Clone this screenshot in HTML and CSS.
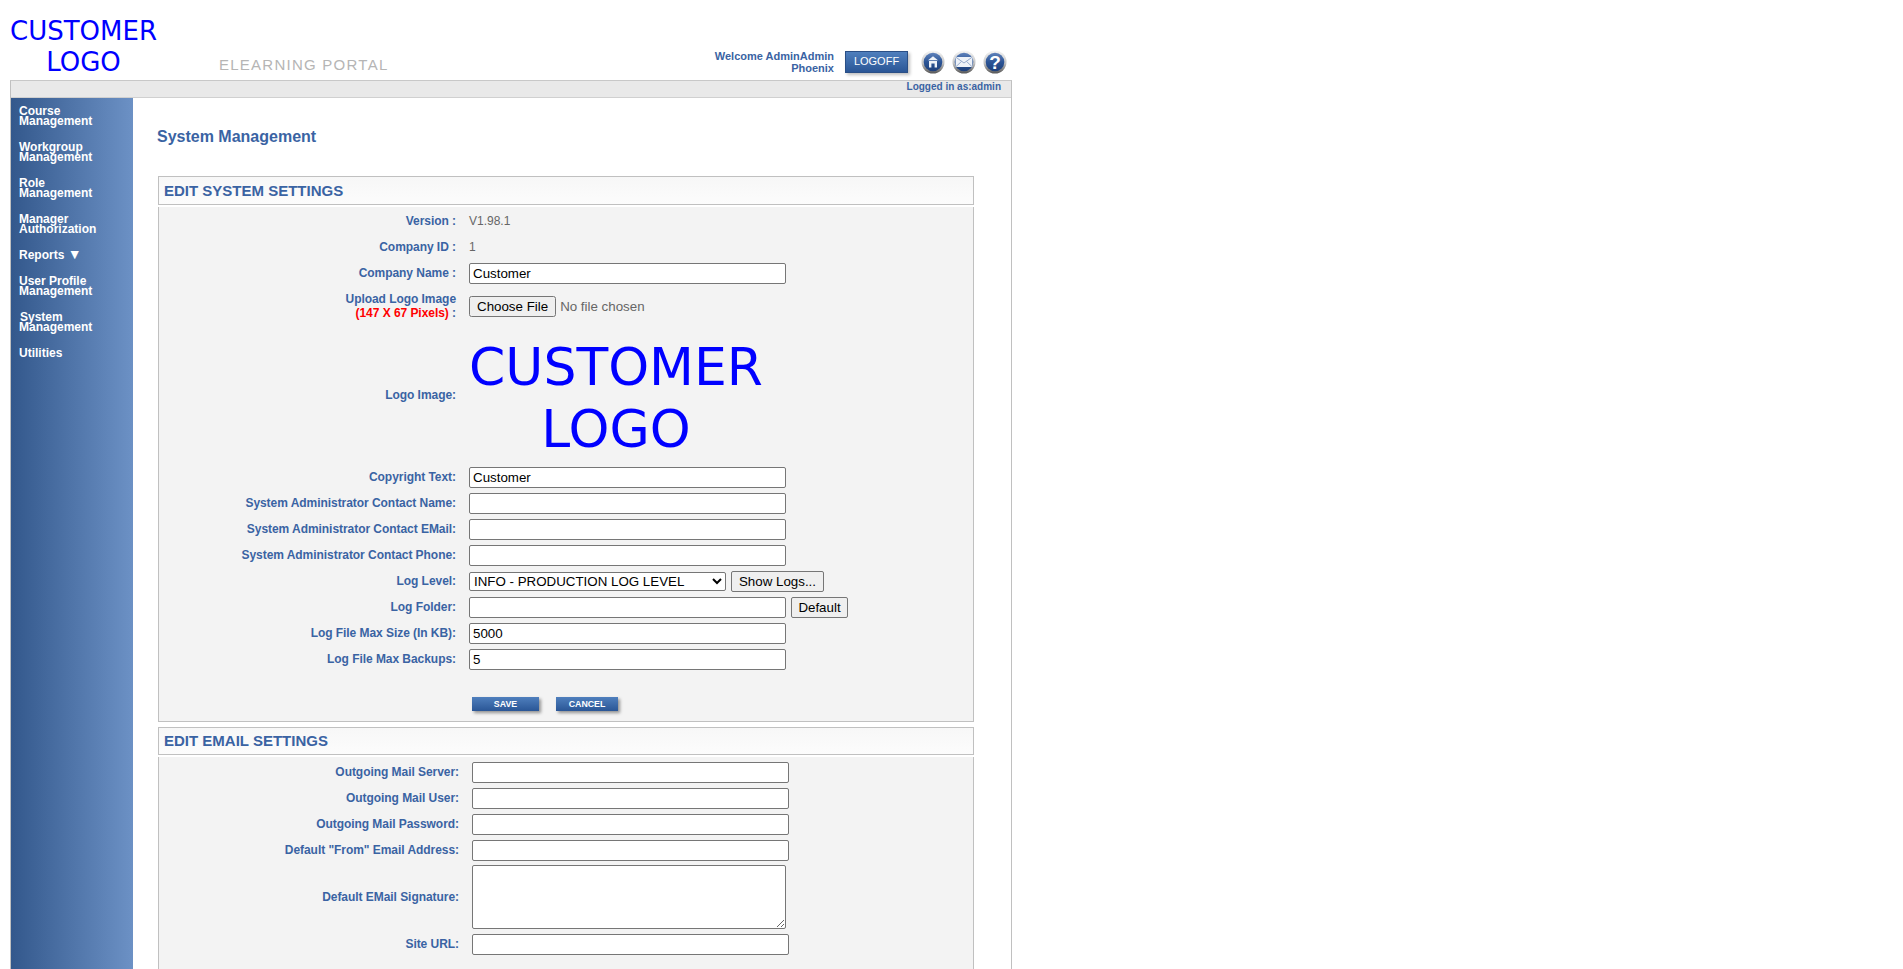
FILE: index.html
```html
<!DOCTYPE html>
<html lang="en">
<head>
<meta charset="utf-8">
<title>System Management</title>
<link rel="stylesheet" href="styles.css">
</head>
<body>
<div class="page">
  <header class="top">
    <div class="logo">CUSTOMER<br>LOGO</div>
    <div class="portal">ELEARNING PORTAL</div>
    <div class="welcome">Welcome AdminAdmin<br>Phoenix</div>
    <a class="logoff">LOGOFF</a>
    <div class="icons">
      <svg class="icon" viewBox="0 0 24 24"><defs>
        <linearGradient id="ring" x1="0" y1="0" x2="0" y2="1"><stop offset="0" stop-color="#f6f6f6"/><stop offset=".55" stop-color="#c4c4c4"/><stop offset="1" stop-color="#555"/></linearGradient>
        <linearGradient id="disc" x1="0" y1="0" x2="0" y2="1"><stop offset="0" stop-color="#5f82bb"/><stop offset=".5" stop-color="#2c5596"/><stop offset="1" stop-color="#1d3f7a"/></linearGradient>
      </defs>
        <circle cx="12" cy="12" r="11.5" fill="url(#ring)"/><circle cx="12" cy="12" r="9.3" fill="url(#disc)"/>
        <path d="M12 6.2 L17 10.2 H7 Z" fill="#eef2f8"/><path d="M8 11 H16 V17.5 H13.6 V13.4 H10.4 V17.5 H8 Z" fill="#eef2f8"/>
      </svg>
      <svg class="icon" viewBox="0 0 24 24">
        <circle cx="12" cy="12" r="11.5" fill="url(#ring)"/><circle cx="12" cy="12" r="9.3" fill="url(#disc)"/>
        <path d="M3.6 7 H20.4 V17 H3.6 Z" fill="#eef2f8"/><path d="M3.6 7 L12 13 L20.4 7 M3.6 17 L9.5 11.4 M20.4 17 L14.5 11.4" fill="none" stroke="#7f98c2" stroke-width=".8"/>
      </svg>
      <svg class="icon" viewBox="0 0 24 24">
        <circle cx="12" cy="12" r="11.5" fill="url(#ring)"/><circle cx="12" cy="12" r="9.3" fill="url(#disc)"/>
        <text class="qmark" x="12" y="18.6" text-anchor="middle">?</text>
      </svg>
    </div>
  </header>
  <div class="frame">
    <div class="status">Logged in as:admin</div>
    <div class="columns">
      <nav class="side">
        <a class="nav">Course<br>Management</a>
        <a class="nav">Workgroup<br>Management</a>
        <a class="nav">Role<br>Management</a>
        <a class="nav">Manager<br>Authorization</a>
        <a class="nav">Reports <span class="caret">▼</span></a>
        <a class="nav">User Profile<br>Management</a>
        <a class="nav"><span class="nudge">System</span><br>Management</a>
        <a class="nav">Utilities</a>
      </nav>
      <main class="content">
        <h1 class="title">System Management</h1>

        <h2 class="sec-head">EDIT SYSTEM SETTINGS</h2>
        <section class="sec-body sys">
          <div class="row"><label class="lab">Version :</label><span class="val">V1.98.1</span></div>
          <div class="row"><label class="lab">Company ID :</label><span class="val">1</span></div>
          <div class="row"><label class="lab">Company Name :</label><input class="txt" type="text" value="Customer"></div>
          <div class="row upload"><label class="lab">Upload Logo Image<br><span class="red">(147 X 67 Pixels)</span> :</label><input class="file" type="file"></div>
          <div class="row logo-row"><label class="lab">Logo Image:</label><div class="biglogo">CUSTOMER<br>LOGO</div></div>
          <div class="row"><label class="lab">Copyright Text:</label><input class="txt" type="text" value="Customer"></div>
          <div class="row"><label class="lab">System Administrator Contact Name:</label><input class="txt" type="text"></div>
          <div class="row"><label class="lab">System Administrator Contact EMail:</label><input class="txt" type="text"></div>
          <div class="row"><label class="lab">System Administrator Contact Phone:</label><input class="txt" type="text"></div>
          <div class="row"><label class="lab">Log Level:</label><div class="ctl"><select class="sel"><option>INFO - PRODUCTION LOG LEVEL</option></select><button class="btn logs" type="button">Show Logs...</button></div></div>
          <div class="row"><label class="lab">Log Folder:</label><div class="ctl"><input class="txt" type="text"><button class="btn dflt" type="button">Default</button></div></div>
          <div class="row"><label class="lab">Log File Max Size (In KB):</label><input class="txt" type="text" value="5000"></div>
          <div class="row"><label class="lab">Log File Max Backups:</label><input class="txt" type="text" value="5"></div>
          <div class="actions"><a class="mini save">SAVE</a><a class="mini cancel">CANCEL</a></div>
        </section>

        <h2 class="sec-head second">EDIT EMAIL SETTINGS</h2>
        <section class="sec-body mail">
          <div class="row"><label class="lab">Outgoing Mail Server:</label><input class="txt" type="text"></div>
          <div class="row"><label class="lab">Outgoing Mail User:</label><input class="txt" type="text"></div>
          <div class="row"><label class="lab">Outgoing Mail Password:</label><input class="txt" type="text"></div>
          <div class="row"><label class="lab">Default "From" Email Address:</label><input class="txt" type="text"></div>
          <div class="row area-row"><label class="lab">Default EMail Signature:</label><textarea class="area"></textarea></div>
          <div class="row"><label class="lab">Site URL:</label><input class="txt" type="text"></div>
        </section>
      </main>
    </div>
  </div>
</div>
</body>
</html>
```
FILE: styles.css
```css
html, body { margin: 0; padding: 0; height: 969px; overflow: hidden; background: #fff; }
body { font-family: "Liberation Sans", Arial, sans-serif; font-size: 12px; color: #3a63a3; }
.page { width: 1002px; height: 969px; padding-left: 10px; }

/* header */
.top { height: 80px; display: flex; align-items: flex-start; }
.logo { width: 147px; margin-top: 16px; font-family: "DejaVu Sans", sans-serif; font-size: 26px; line-height: 31px; color: #0000ff; text-align: center; white-space: nowrap; }
.portal { margin: 56px 0 0 62px; font-size: 15px; line-height: 17px; letter-spacing: 1.25px; color: #b5b5b5; white-space: nowrap; }
.welcome { margin: 50px 0 0 auto; font-size: 11px; font-weight: bold; line-height: 12px; text-align: right; color: #3a63a3; }
.logoff { margin: 51px 0 0 11px; width: 63px; height: 22px; line-height: 19px; text-align: center; font-size: 11px; color: #fff; background: linear-gradient(#4f7fbd, #2a5696); border: 1px solid #2a4f86; box-sizing: border-box; box-shadow: 2px 2px 3px rgba(0,0,0,.25); }
.icons { display: flex; gap: 7px; margin: 50px 5px 0 13px; }
.icon { width: 24px; height: 24px; display: block; }
.qmark { font: bold 19px "Liberation Sans", sans-serif; fill: #fff; }

/* frame */
.frame { width: 1002px; height: 889px; border-left: 1px solid #c0c0c0; border-right: 1px solid #c0c0c0; border-top: 1px solid #c8c8c8; box-sizing: border-box; overflow: hidden; }
.status { height: 17px; background: #e9e9e9; border-bottom: 1px solid #d0d0d0; box-sizing: border-box; text-align: right; padding-right: 10px; font-size: 10px; font-weight: bold; line-height: 12px; }
.columns { display: flex; height: 872px; }
.side { width: 122px; flex: none; padding: 8px 0 0 8px; box-sizing: border-box; background: linear-gradient(to right, #33588c, #6c91c5); }
.nav { display: block; padding-bottom: 16px; font-size: 12px; font-weight: bold; line-height: 10px; color: #fff; }
.nudge { margin-left: 1px; }
.caret { font-size: 14px; line-height: 0; }

/* content */
.content { flex: 1; padding-left: 25px; min-width: 0; }
.title { margin: 0 0 0 -1px; padding-top: 30px; height: 48px; font-size: 16px; font-weight: bold; line-height: 17px; color: #3a63a3; }
.sec-head { margin: 0; width: 816px; height: 29px; box-sizing: border-box; padding-left: 5px; border: 1px solid #c0c0c0; font-size: 15px; font-weight: bold; line-height: 27px; color: #3a63a3; background: linear-gradient(#f7f7f7, #fcfcfc); }
.second { margin-top: 5px; height: 28px; line-height: 26px; }
.sec-body { width: 816px; box-sizing: border-box; margin-top: 2px; background: #f3f3f3; border: 1px solid #c0c0c0; border-top: 0; }
.sys { height: 515px; padding-top: 1px; }
.mail { height: 215px; padding-top: 2px; }
.row { display: flex; align-items: center; min-height: 26px; }
.lab { flex: none; width: 297px; margin-right: 13px; text-align: right; font-weight: bold; line-height: 14px; letter-spacing: -.05px; color: #3a63a3; }
.mail .lab { width: 300px; }
.val { color: #666; }
.red { color: #f00; }
.txt { width: 317px; height: 21px; box-sizing: border-box; margin: 0; padding: 1px 3px; font: 13.33px "Liberation Sans", sans-serif; color: #000; background: #fff; border: 1px solid #767676; border-radius: 2px; }
.upload { height: 40px; }
.file { margin: 0; width: 300px; font: 13.33px "Liberation Sans", sans-serif; color: #666; }
.logo-row { height: 138px; }
.biglogo { width: 294px; margin-top: 6px; font-family: "DejaVu Sans", sans-serif; font-size: 52px; line-height: 62px; color: #0000ff; text-align: center; white-space: nowrap; }
.ctl { display: flex; align-items: center; }
.sel { width: 257px; height: 19px; margin: 0; padding: 0; font: 13.33px "Liberation Sans", sans-serif; color: #000; background: #fff; border: 1px solid #767676; border-radius: 2px; }
.btn { height: 21px; margin: 0; padding: 0; font: 13.33px "Liberation Sans", sans-serif; color: #000; background: #efefef; border: 1px solid #767676; border-radius: 2px; }
.logs { width: 93px; margin-left: 5px; }
.dflt { width: 57px; margin-left: 5px; }
.actions { display: flex; padding: 25px 0 0 313px; }
.mini { height: 14px; line-height: 14px; text-align: center; font-size: 8.8px; font-weight: bold; color: #fff; background: linear-gradient(#4f7fbd, #2a5696); box-shadow: 2px 2px 3px rgba(0,0,0,.4); }
.save { width: 67px; }
.cancel { width: 62px; margin-left: 17px; }
.area-row { min-height: 0; height: 68px; }
.area { width: 314px; height: 64px; box-sizing: border-box; margin: 0; padding: 2px; font: 13.33px "Liberation Sans", sans-serif; background: #fff; border: 1px solid #767676; border-radius: 2px; }
```
